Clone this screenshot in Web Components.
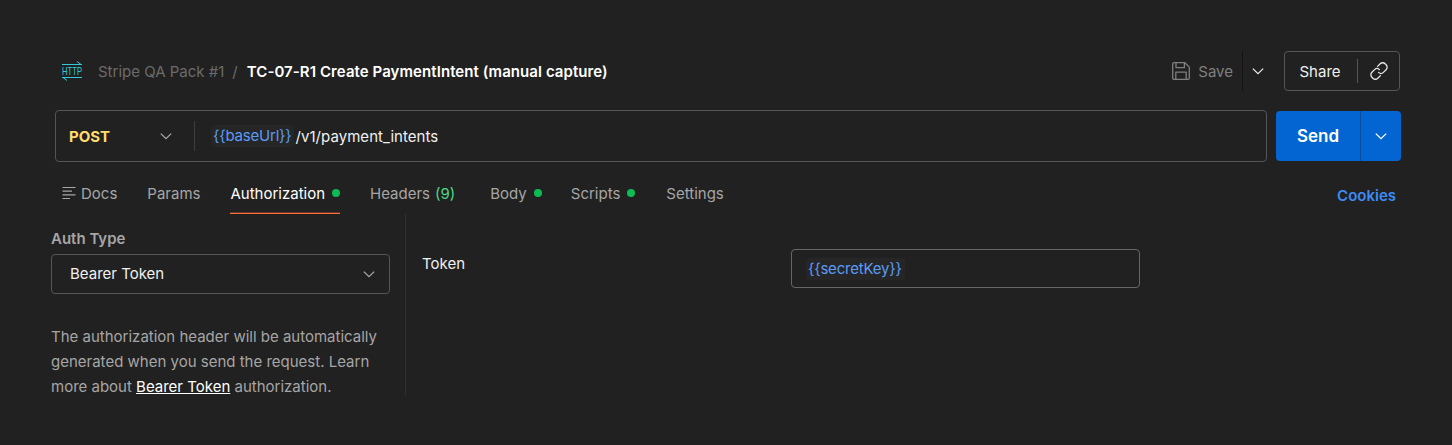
<!DOCTYPE html>
<html>
<head>
<meta charset="utf-8">
<title>Request</title>
<style>
  html, body { margin: 0; background: #212121; }
  body { width: 1452px; height: 445px; overflow: hidden; font: 15px Inter, "Liberation Sans", sans-serif; color: #fff; }
</style>
</head>
<body>
<request-app></request-app>
<script>
const chevron = (size, color) => `<svg width="${size}" height="${size}" viewBox="0 0 16 16" fill="none" stroke="${color}" stroke-width="1.3"><path d="M2.8 5.6 8 10.6l5.2-5"/></svg>`;

class VarChip extends HTMLElement {
  constructor() {
    super();
    this.attachShadow({ mode: 'open' });
    this.shadowRoot.innerHTML = `
      <style>
        :host {
          display: inline-block;
          padding: 0 3px 0 2px;
          line-height: 22px;
          letter-spacing: -0.2px;
          color: #5b9bf5;
          background: #262626;
          border-radius: 4px;
        }
      </style>
      <slot></slot>
    `;
  }
}

class RequestHeader extends HTMLElement {
  constructor() {
    super();
    this.attachShadow({ mode: 'open' });
    this.shadowRoot.innerHTML = `
      <style>
        :host { display: flex; align-items: center; height: 40px; padding: 0 1px 0 11px; }
        .http { display: block; margin-right: 16px; }
        .crumb { color: #6b6b6b; }
        .sep { color: #6b6b6b; margin: 0 9px 0 8px; }
        .title { font-weight: 600; color: #fff; letter-spacing: 0.07px; }
        .spacer { flex: 1; }
        .save { display: flex; align-items: center; color: #7f7f7f; height: 40px; }
        .save span { margin: 0 9px 0 8px; }
        .split { width: 1px; height: 40px; background: #141414; }
        .more { width: 29px; display: flex; justify-content: center; margin-right: 12px; }
        .share {
          display: flex; align-items: center; box-sizing: border-box;
          width: 116px; height: 40px;
          border: 1px solid #555; border-radius: 4px; color: #f0f0f0;
        }
        .share span { box-sizing: border-box; width: 72px; padding-right: 2px; text-align: center; }
        .share i { width: 1px; height: 24px; background: #555; }
        .share div { flex: 1; display: flex; justify-content: center; }
      </style>
      <svg class="http" width="20" height="20" viewBox="0 0 20 20" fill="none" stroke="#33c9dc" stroke-width="1">
        <path d="M0 3.5h20M15 0.5l4 3"/>
        <path d="M0 16.5h20M5 19.5l-4-3"/>
        <text transform="translate(0 13.6) scale(.73 1)" font-family="Liberation Sans, sans-serif" font-size="10.5" fill="#33c9dc" stroke="none">HTTP</text>
      </svg>
      <span class="crumb">Stripe QA Pack #1</span>
      <span class="sep">/</span>
      <span class="title">TC-07-R1 Create PaymentIntent (manual capture)</span>
      <div class="spacer"></div>
      <div class="save">
        <svg width="18" height="18" viewBox="0 0 18 18" fill="none" stroke="#7f7f7f" stroke-width="1.3" stroke-linejoin="round">
          <path d="M.7 2a1.3 1.3 0 0 1 1.3-1.3h10.9l4.4 4.4v10.9a1.3 1.3 0 0 1-1.3 1.3H2a1.3 1.3 0 0 1-1.3-1.3z"/>
          <path d="M4 .8v4.9h8.4V.8M3.8 17.2v-7h10.4v7"/>
        </svg>
        <span>Save</span>
      </div>
      <div class="split"></div>
      <div class="more">${chevron(16, '#e6e6e6')}</div>
      <div class="share">
        <span>Share</span><i></i>
        <div>
          <svg width="20" height="20" viewBox="0 0 20 20" fill="none" stroke="#e6e6e6" stroke-width="1.3" stroke-linecap="round">
            <path d="M8.6 5.4l2.6-2.6a3.4 3.4 0 0 1 4.9 0l1 1a3.4 3.4 0 0 1 0 4.9l-2.7 2.7a3.4 3.4 0 0 1-4.8 0"/>
            <path d="M11.4 14.6l-2.6 2.6a3.4 3.4 0 0 1-4.9 0l-1-1a3.4 3.4 0 0 1 0-4.9l2.7-2.7a3.4 3.4 0 0 1 4.8 0"/>
          </svg>
        </div>
      </div>
    `;
  }
}

class UrlBar extends HTMLElement {
  constructor() {
    super();
    this.attachShadow({ mode: 'open' });
    this.shadowRoot.innerHTML = `
      <style>
        :host { display: flex; align-items: center; margin-left: 4px; }
        .box {
          display: flex; align-items: center; box-sizing: border-box;
          width: 1212px; height: 52px;
          border: 1px solid #555; border-radius: 4px;
        }
        .method { width: 138px; display: flex; align-items: center; padding-left: 13px; box-sizing: border-box; font-weight: 600; color: #ffdc6b; }
        .method b { flex: 1; font-weight: 700; }
        .method svg { margin-right: 20px; }
        .div { width: 1px; height: 30px; background: #3d3d3d; margin-right: 16px; }
        .path { color: #f0f0f0; margin-left: 1px; letter-spacing: 0.05px; }
        .send {
          display: flex; align-items: stretch; height: 50px; width: 125px;
          margin-left: 9px; background: #0265d2; border-radius: 4px; color: #fff;
        }
        .send span { width: 84px; display: flex; align-items: center; justify-content: center; font-size: 17px; font-weight: 600; }
        .send i { width: 1px; background: #0a4f9e; }
        .send div { flex: 1; display: flex; align-items: center; justify-content: center; }
      </style>
      <div class="box">
        <div class="method"><b>POST</b>${chevron(16, '#a6a6a6')}</div>
        <div class="div"></div>
        <var-chip>{{baseUrl}}</var-chip>
        <span class="path">/v1/payment_intents</span>
      </div>
      <div class="send"><span>Send</span><i></i><div>${chevron(16, '#fff')}</div></div>
    `;
  }
}

class TabItem extends HTMLElement {
  constructor() {
    super();
    this.attachShadow({ mode: 'open' });
    this.shadowRoot.innerHTML = `
      <style>
        :host { display: flex; align-items: center; height: 40px; padding-bottom: 2px; box-sizing: border-box; color: #a6a6a6; position: relative; white-space: nowrap; }
        :host([active]) { color: #fff; }
        .line { display: none; position: absolute; left: 0; right: 0; bottom: 0; height: 1px; background: #ff6c37; box-shadow: 0 -1px 0 rgba(255, 108, 55, .3); }
        :host([active]) .line { display: block; }
        .dot { display: none; width: 8px; height: 8px; border-radius: 50%; background: #0cbb52; margin-left: 7px; }
        :host([dot]) .dot { display: block; }
      </style>
      <slot></slot><span class="dot"></span><span class="line"></span>
    `;
  }
}

class TabStrip extends HTMLElement {
  constructor() {
    super();
    this.attachShadow({ mode: 'open' });
    this.shadowRoot.innerHTML = `
      <style>
        :host { display: flex; align-items: center; height: 40px; margin: 12px 5px 0 11px; }
        .cookies { margin-left: auto; color: #3d8bf5; font-weight: 600; position: relative; top: 1px; }
        svg { margin-right: 4px; }
        .n { color: #4fd68a; margin-left: 5px; }
      </style>
      <tab-item style="margin-right:30px">
        <svg width="15" height="14" viewBox="0 0 15 14" stroke="#a6a6a6" stroke-width="1.2" fill="none"><path d="M0.5 1.5h13M0.5 5.2h9.5M0.5 8.9h13M0.5 12.5h7.5"/></svg>Docs
      </tab-item>
      <tab-item style="margin-right:30px">Params</tab-item>
      <tab-item active dot style="margin-right:30px">Authorization</tab-item>
      <tab-item style="margin-right:35px">Headers<span class="n">(9)</span></tab-item>
      <tab-item dot style="margin-right:29px">Body</tab-item>
      <tab-item dot style="margin-right:31px">Scripts</tab-item>
      <tab-item>Settings</tab-item>
      <span class="cookies">Cookies</span>
    `;
  }
}

class AuthPanel extends HTMLElement {
  constructor() {
    super();
    this.attachShadow({ mode: 'open' });
    this.shadowRoot.innerHTML = `
      <style>
        :host { display: flex; height: 182px; }
        .side { width: 355px; box-sizing: border-box; border-right: 1px solid #303030; padding-right: 15px; }
        .label { color: #a6a6a6; font-weight: 600; line-height: 17px; margin: 16px 0 7px; }
        .select {
          display: flex; align-items: center; justify-content: space-between; box-sizing: border-box;
          height: 40px; padding: 0 12px 1px 18px;
          border: 1px solid #555; border-radius: 4px; color: #f0f0f0;
        }
        p { margin: 30px 0 0; color: #a6a6a6; line-height: 25px; }
        a { color: #fff; text-decoration: underline; }
        .main { flex: 1; display: flex; align-items: flex-start; padding: 35px 0 0 16px; }
        .token { width: 369px; line-height: 30px; color: #f0f0f0; }
        .field {
          display: flex; align-items: center; box-sizing: border-box;
          width: 349px; height: 39px; padding-left: 14px;
          border: 1px solid #666; border-radius: 4px;
        }
      </style>
      <div class="side">
        <div class="label">Auth Type</div>
        <div class="select"><span>Bearer Token</span>${chevron(16, '#a6a6a6')}</div>
        <p>The authorization header will be automatically generated when you send the request. Learn more about <a>Bearer Token</a> authorization.</p>
      </div>
      <div class="main">
        <div class="token">Token</div>
        <div class="field"><var-chip>{{secretKey}}</var-chip></div>
      </div>
    `;
  }
}

class RequestApp extends HTMLElement {
  constructor() {
    super();
    this.attachShadow({ mode: 'open' });
    this.shadowRoot.innerHTML = `
      <style>
        :host { display: block; padding: 51px 51px 0; }
        request-header { margin-bottom: 19px; }
      </style>
      <request-header></request-header>
      <url-bar></url-bar>
      <tab-strip></tab-strip>
      <auth-panel></auth-panel>
    `;
  }
}

customElements.define('var-chip', VarChip);
customElements.define('request-header', RequestHeader);
customElements.define('url-bar', UrlBar);
customElements.define('tab-item', TabItem);
customElements.define('tab-strip', TabStrip);
customElements.define('auth-panel', AuthPanel);
customElements.define('request-app', RequestApp);
</script>
</body>
</html>
